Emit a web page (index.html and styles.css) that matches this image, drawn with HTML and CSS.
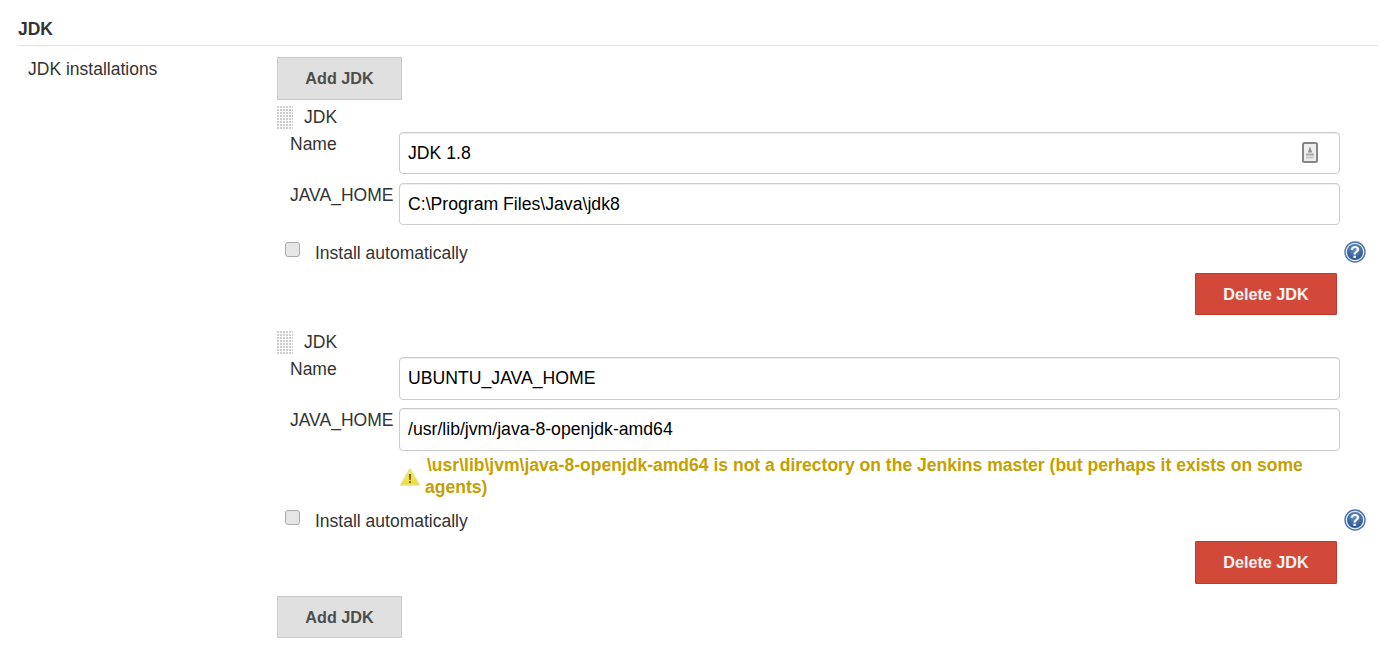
FILE: index.html
```html
<!DOCTYPE html>
<html lang="en">
<head>
<meta charset="utf-8">
<title>JDK</title>
<link rel="stylesheet" href="styles.css">
</head>
<body>
<svg class="defs" width="0" height="0" aria-hidden="true">
  <defs>
    <pattern id="dots" width="3" height="3" patternUnits="userSpaceOnUse">
      <rect width="2" height="2" fill="#cfcfcf"/>
    </pattern>
    <radialGradient id="helpfill" cx="50%" cy="30%" r="75%">
      <stop offset="0" stop-color="#6a8fc2"/>
      <stop offset="1" stop-color="#234f8e"/>
    </radialGradient>
    <linearGradient id="warnfill" x1="0" y1="0" x2="0" y2="1">
      <stop offset="0" stop-color="#fbf07a"/>
      <stop offset="1" stop-color="#efd92e"/>
    </linearGradient>
  </defs>
</svg>
<main class="page">
  <h2 class="section-title">JDK</h2>
  <div class="section-row">
    <div class="section-label">JDK installations</div>
    <div class="section-body">
      <button class="btn btn-add" type="button">Add JDK</button>

      <section class="chunk">
        <div class="chunk-head">
          <svg class="handle" width="16" height="23" viewBox="0 0 16 23"><rect width="16" height="23" fill="url(#dots)"/></svg>
          <span>JDK</span>
        </div>
        <div class="field field-short">
          <label class="field-label">Name</label>
          <div class="input-wrap">
            <input class="text-input" type="text" value="JDK 1.8">
            <svg class="autofill" width="16" height="21" viewBox="0 0 16 21">
              <rect x="1" y="1" width="14" height="19" rx="1.5" fill="#eeeeee" stroke="#858585" stroke-width="2"/>
              <path d="M8 4.500l2.200 6H5.800z" fill="#8f8f8f"/>
              <rect x="4" y="11.500" width="8" height="2" fill="#a8a8a8"/>
              <rect x="4" y="14.500" width="8" height="2" fill="#c8c8c8"/>
            </svg>
          </div>
        </div>
        <div class="field field-short">
          <label class="field-label">JAVA_HOME</label>
          <input class="text-input" type="text" value="C:\Program Files\Java\jdk8">
        </div>
        <div class="check-row">
          <span class="checkbox"></span>
          <span class="check-label">Install automatically</span>
          <svg class="help" width="22" height="22" viewBox="0 0 22 22">
            <circle cx="11" cy="11" r="10" fill="#e4ecf6" stroke="#4a73ad" stroke-width="1.4"/>
            <circle cx="11" cy="11" r="8" fill="url(#helpfill)"/>
            <text x="11" y="16.500" text-anchor="middle" class="help-mark">?</text>
          </svg>
        </div>
        <div class="chunk-actions">
          <button class="btn btn-delete btn-delete-short" type="button">Delete JDK</button>
        </div>
      </section>

      <section class="chunk chunk-second">
        <div class="chunk-head">
          <svg class="handle" width="16" height="23" viewBox="0 0 16 23"><rect width="16" height="23" fill="url(#dots)"/></svg>
          <span>JDK</span>
        </div>
        <div class="field">
          <label class="field-label">Name</label>
          <input class="text-input" type="text" value="UBUNTU_JAVA_HOME">
        </div>
        <div class="field field-last">
          <label class="field-label">JAVA_HOME</label>
          <input class="text-input" type="text" value="/usr/lib/jvm/java-8-openjdk-amd64">
        </div>
        <div class="warning">
          <svg class="warn-icon" width="20" height="18" viewBox="0 0 20 18">
            <path d="M10 1.200L19 16.800H1z" fill="url(#warnfill)" stroke="#ece17a" stroke-width="1.800" stroke-linejoin="round"/>
            <path d="M8.900 6h2.200l-.4 6H9.300z" fill="#6b5f20"/>
            <rect x="9.100" y="13" width="1.800" height="2" fill="#6b5f20"/>
          </svg>
          <p class="warn-text">\usr\lib\jvm\java-8-openjdk-amd64 is not a directory on the Jenkins master (but perhaps it exists on some agents)</p>
        </div>
        <div class="check-row">
          <span class="checkbox"></span>
          <span class="check-label">Install automatically</span>
          <svg class="help" width="22" height="22" viewBox="0 0 22 22">
            <circle cx="11" cy="11" r="10" fill="#e4ecf6" stroke="#4a73ad" stroke-width="1.4"/>
            <circle cx="11" cy="11" r="8" fill="url(#helpfill)"/>
            <text x="11" y="16.500" text-anchor="middle" class="help-mark">?</text>
          </svg>
        </div>
        <div class="chunk-actions">
          <button class="btn btn-delete" type="button">Delete JDK</button>
        </div>
      </section>

      <button class="btn btn-add btn-add-last" type="button">Add JDK</button>
    </div>
  </div>
</main>
</body>
</html>
```
FILE: styles.css
```css
* { box-sizing: border-box; }
html, body { margin: 0; padding: 0; background: #fff; }
body {
  width: 1388px;
  height: 648px;
  overflow: hidden;
  font-family: "Liberation Sans", Arial, sans-serif;
  font-size: 17.5px;
  color: #333;
}
.defs { position: absolute; }
.page { padding: 0 10px 0 18px; }
.section-title {
  margin: 0;
  height: 46px;
  padding-top: 20px;
  font-size: 17.5px;
  line-height: 18px;
  font-weight: 700;
  border-bottom: 1px solid #e2e2e2;
}
.section-row { display: flex; padding-top: 11px; }
.section-label {
  width: 259px;
  padding: 2px 0 0 10px;
  line-height: 20px;
}
.section-body { width: 1063px; }
.btn {
  display: block;
  height: 43px;
  font-family: inherit;
  font-size: 16.2px;
  font-weight: 700;
  border-radius: 1px;
  padding: 0;
  cursor: pointer;
}
.btn-add {
  width: 125px;
  background: #e0e0e0;
  border: 1px solid #c8c8c8;
  color: #4d4d4d;
}
.btn-add-last { margin-top: 12px; height: 42px; }
.btn-delete {
  width: 142px;
  background: #d24939;
  border: 1px solid #c0392b;
  color: #f4f4f4;
}
.btn-delete-short { height: 42px; }
.chunk { padding-top: 6px; }
.chunk-second { padding-top: 16px; }
.chunk-head {
  display: flex;
  align-items: flex-start;
  gap: 11px;
  height: 26px;
  line-height: 22px;
}
.handle { display: block; flex: none; }
.field {
  display: flex;
  margin-left: 13px;
  margin-bottom: 8px;
  width: 1050px;
}
.field-short { margin-bottom: 9px; }
.field-short + .check-row { margin-top: -1px; }
.field-last { margin-bottom: 3px; }
.field-label {
  width: 109px;
  flex: none;
  padding-top: 2px;
  line-height: 20px;
  color: #333;
  white-space: nowrap;
}
.input-wrap { position: relative; width: 941px; }
.text-input {
  display: block;
  width: 941px;
  height: 43px;
  padding: 0 8px;
  font-family: inherit;
  font-size: 17.65px;
  color: #000;
  background: #fff;
  border: 1px solid #ccc;
  border-radius: 4px;
  outline: none;
  box-shadow: inset 0 1px 1px rgba(0, 0, 0, 0.075);
}
.field-short .text-input { height: 42px; }
.autofill { position: absolute; top: 10px; right: 22px; }
.check-row {
  display: flex;
  align-items: flex-start;
  height: 40px;
  padding-left: 8px;
}
.checkbox {
  width: 15px;
  height: 15px;
  margin-top: 9px;
  background: #e6e6e6;
  border: 1px solid #aaa;
  border-radius: 3px;
  flex: none;
}
.check-label { margin: 10px 0 0 15px; line-height: 20px; }
.help { margin: 8px -26px 0 auto; flex: none; }
.help-mark {
  font-family: "Liberation Sans", Arial, sans-serif;
  font-size: 16px;
  font-weight: 700;
  fill: #fff;
}
.chunk-actions { display: flex; justify-content: flex-end; padding-right: 3px; }
.warning {
  display: flex;
  align-items: center;
  margin: 0 0 3px 122px;
  width: 941px;
}
.warn-icon { flex: none; margin: 2px 0 0 1px; }
.warn-text {
  margin: 0;
  padding: 0 0 0 5px;
  text-indent: 2px;
  font-size: 17.55px;
  font-weight: 700;
  line-height: 22px;
  color: #c4a000;
}
```
